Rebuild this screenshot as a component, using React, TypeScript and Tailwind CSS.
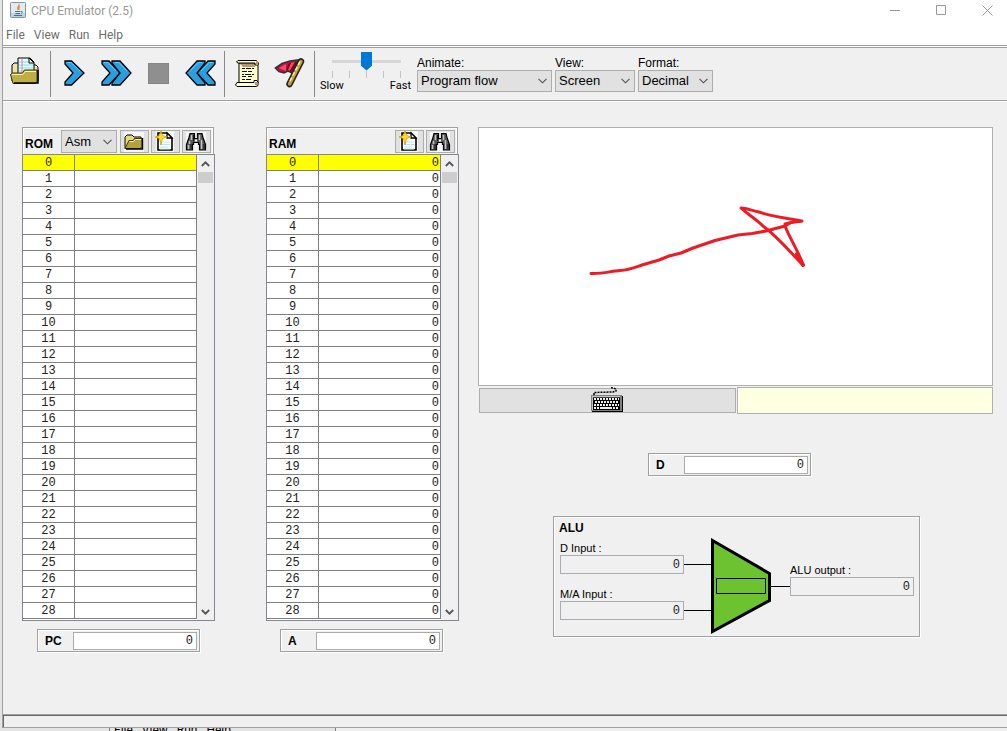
import React, { useState } from "react";

const menus = ["File", "View", "Run", "Help"];

const rows = Array.from({ length: 29 }, (_, i) => i);

const Chevron = ({ className = "" }: { className?: string }) => (
  <svg
    className={className}
    width="9"
    height="6"
    viewBox="0 0 9 6"
    fill="none"
    stroke="#505050"
    strokeWidth="1.1"
  >
    <path d="M.5.8l4 4 4-4" />
  </svg>
);

const JavaIcon = () => (
  <svg width="16" height="16" viewBox="0 0 16 16">
    <rect x=".5" y=".5" width="15" height="15" rx="1" fill="#e4ebf0" stroke="#7d95ab" />
    <path d="M1 11h14v4H1z" fill="#c3d0da" />
    <path d="M9 2c1 2-3 3-1 6M10 4.500c-2 1-1 2-1 3.500" stroke="#ec8a3c" strokeWidth="1.300" fill="none" />
    <path d="M5 9.500h5.500M5.500 11.500h4.500M4 13.500h8M11 9.500c2-.5 1.500 1.500 0 2" stroke="#46708f" fill="none" />
  </svg>
);

const OpenIcon = () => (
  <svg width="30" height="32" viewBox="0 0 30 32">
    <path d="M2 24V8l2-2h5l2 2h15l2 2v14z" fill="#efe2ac" stroke="#000" />
    <path d="M8 17V1h12l4 4v12z" fill="#e6fbfd" stroke="#000" />
    <path d="M9 5h13M9 8h14M9 11h14M9 14h14" stroke="#7fe0f0" />
    <path d="M12 2v14" stroke="#f08080" />
    <path d="M19 1l5 5h-5z" fill="#fff" stroke="#000" />
    <path d="M.5 17.500l2-1.500h10l2-3H27v12l-2 1.500H3z" fill="#bfae45" stroke="#3f390c" />
    <path d="M2 17.500h11l2-3h11" fill="none" stroke="#fff3a5" />
    <path d="M28 13v13H4" fill="none" stroke="#000" strokeWidth="1.500" />
  </svg>
);

const StepIcon = () => (
  <svg width="21" height="26" viewBox="0 0 21 26">
    <path d="M1 1h6.500L20 13 7.500 25H1v-3l8-9-8-9z" fill="#2a9fe0" stroke="#000" strokeWidth="1.300" />
    <path d="M3 2.500h4l9 8.500" fill="none" stroke="#6cc8f8" />
  </svg>
);

const FastIcon = ({ flip }: { flip?: boolean }) => (
  <svg className={flip ? "-scale-x-100" : ""} width="31" height="26" viewBox="0 0 31 26">
    <path d="M1 1h7l11 12L8 25H1v-3l8-9-8-9z" fill="#2a9fe0" stroke="#000" strokeWidth="1.300" />
    <path d="M11 1h8l11 12-11 12h-8v-2l8-10-8-10z" fill="#2a9fe0" stroke="#000" strokeWidth="1.300" />
    <path d="M3 2.500h4l8 8.500M14 2.500h4l8 8.500" fill="none" stroke="#6cc8f8" />
  </svg>
);

const ScriptIcon = () => (
  <svg width="24" height="27" viewBox="0 0 24 27">
    <path d="M4 3v20h19V3z" fill="#ffffc9" stroke="#000" />
    <path d="M5 4h15v3H8z" fill="#bd9275" />
    <path d="M3 .5h18l2 1.500v3h-3V3H3L1.500 2z" fill="#ffffd5" stroke="#000" />
    <path d="M21 1h2v4h-2z" fill="#bd9275" />
    <path d="M2 22.500h17v-2h3l1 2v3l-2 1H2l-1.500-1.500z" fill="#ffffd5" stroke="#000" />
    <path d="M20 22h2.500v3H20z" fill="#bd9275" />
    <path
      d="M7 8.500h3m1 0h5m1 0h2M7 11.500h5m1 0h4M7 14.500h2m1 0h6m1 0h2M7 16.500h4m2 0h4M7 19.500h3m1 0h5"
      stroke="#111"
    />
  </svg>
);

const FlagIcon = () => (
  <svg width="31" height="30" viewBox="0 0 31 30">
    <path d="M1.500 10L8 5.500l8-2.500 8-1-6 13-4-2-4 2-5-1.500z" fill="#c4123a" stroke="#333" strokeWidth="1.600" />
    <path d="M5 10l7-4v7zM17 5l4-1-4 9-3-1z" fill="#f04a6a" />
    <path d="M16 5l-3 7M22 4l-6 10" stroke="#79001c" strokeWidth="1.800" />
    <path d="M27 3.500L15.500 26" stroke="#222" strokeWidth="6.500" strokeLinecap="round" />
    <path d="M27 3.500L15.500 26" stroke="#c99b35" strokeWidth="3.500" strokeLinecap="round" />
    <path d="M26 3.500L15 25" stroke="#fff0ae" strokeWidth="1.500" strokeDasharray="4 2" />
  </svg>
);

const FolderIcon = () => (
  <svg width="22" height="20" viewBox="0 0 22 20">
    <path d="M1 0h20v20H1z" fill="#f6f6f6" />
    <path d="M2 16.500V5l2-2h5l2 2h7v11z" fill="#e8d77c" stroke="#000" />
    <path d="M2 16.500l4-8h4l1.500-2H19v8l-2 2z" fill="#b4a23c" stroke="#3f390c" />
    <path d="M6.500 9.500h4l2-2H18" fill="none" stroke="#fff2a0" />
    <path d="M19.500 6v11H3" fill="none" stroke="#000" strokeWidth="1.500" />
  </svg>
);

const NewIcon = () => (
  <svg width="20" height="21" viewBox="0 0 20 21">
    <path d="M1 0h18v21H1z" fill="#f6f6f6" />
    <path d="M3 2h9l5 5v12H3z" fill="#fff" stroke="#000" strokeWidth="1.600" />
    <path d="M5 11h10M5 13.500h10M5 16h8M5 18h10" stroke="#b5e8f5" />
    <path d="M12 2v5h5z" fill="#fff" stroke="#000" strokeWidth="1.300" />
    <path d="M6 0l1.500 4.500L12 6 7.500 7.500 6 14 4.500 7.500 0 6l4.500-1.500z" fill="#ffdf22" stroke="#d89a00" strokeWidth=".8" />
  </svg>
);

const FindIcon = () => (
  <svg width="22" height="20" viewBox="0 0 22 20">
    <path d="M1 0h20v20H1z" fill="#f6f6f6" />
    <path
      d="M5 1.500h4.500v5h3v-5H17l1 4 2.500 7v5.500h-6v-5.500h-1v-2h-5v2h-1V18h-6v-5.500l2.500-7z"
      fill="#5a5a5a"
      stroke="#000"
      strokeWidth="1.200"
    />
    <path d="M6.500 3v5M4.500 9v3M3.500 13v4M14.500 3v5M16.500 8v9" stroke="#c4c4c4" strokeWidth="1.400" />
    <path d="M8.500 3v6M12.500 4v3M6 12v5M19 12v5" stroke="#111" />
    <path d="M10 7.500h2v2h-2z" fill="#fff" />
  </svg>
);

const KeyboardIcon = () => (
  <svg width="32" height="25" viewBox="0 0 32 25">
    <path d="M3 8V5.500L22 5l3-1v-2l-5-1.500" fill="none" stroke="#000" strokeWidth="1.500" strokeDasharray="2 1" />
    <path d="M1 9h31v16H1z" fill="#000" />
    <path d="M0 8h31v16H0z" fill="#808080" />
    <path d="M1 9h28v1H2v13H1z" fill="#c4c4c4" />
    <path d="M2 10.500h27v12.500H2z" fill="#000" />
    <path d="M3 12h25M4 15h24M3 18h25" stroke="#eee" strokeWidth="1.800" strokeDasharray="2 1" />
    <path d="M3 21h2m1 0h2m1 0h12m1 0h2m1 0h2" stroke="#eee" strokeWidth="1.800" />
  </svg>
);

interface ToolButtonProps {
  label: string;
  children: React.ReactNode;
}

const ToolButton: React.FC<ToolButtonProps> = ({ label, children }) => (
  <button
    aria-label={label}
    className="flex h-[46px] w-[42px] shrink-0 items-center justify-center pr-0.5 pb-0.5"
  >
    {children}
  </button>
);

const SmallButton: React.FC<ToolButtonProps> = ({ label, children }) => (
  <button
    aria-label={label}
    className="flex h-[23px] w-[29px] items-center justify-center border border-[#adadad] bg-[#e1e1e1] pr-0.5"
  >
    {children}
  </button>
);

interface DropDownProps {
  id: string;
  label: string;
  options: string[];
  width: string;
}

const DropDown: React.FC<DropDownProps> = ({ id, label, options, width }) => (
  <div className={`shrink-0 ${width}`}>
    <label htmlFor={id} className="block text-xs leading-[14px]">
      {label}
    </label>
    <div className="relative">
      <select
        id={id}
        className="block h-[22px] w-full appearance-none border border-[#adadad] bg-[#e1e1e1] pl-[3px] text-[13px] leading-5"
      >
        {options.map((o) => (
          <option key={o}>{o}</option>
        ))}
      </select>
      <Chevron className="pointer-events-none absolute top-2 right-[5px]" />
    </div>
  </div>
);

const Separator = () => <div className="h-[46px] w-px shrink-0 bg-[#888888]" />;

interface RegisterProps {
  name: string;
  className?: string;
}

const Register: React.FC<RegisterProps> = ({ name, className }) => (
  <div className={`w-[163px] border border-[#a0a0a0] shadow-[1px_1px_0_#ffffff] ${className}`}>
    <div className="flex h-[21px] border-t border-l border-white pr-0.5">
      <label htmlFor={`reg-${name}`} className="w-[34px] pl-1.5 text-xs leading-[21px] font-bold">
        {name}
      </label>
      <input
        id={`reg-${name}`}
        defaultValue="0"
        className="mt-px h-[18px] w-0 flex-1 border border-[#ababab] bg-white pr-[3px] text-right font-['Liberation_Mono',monospace] text-xs text-[#222222]"
      />
    </div>
  </div>
);

interface MemoryProps {
  name: string;
  value: string;
  withAsm?: boolean;
}

const Memory: React.FC<MemoryProps> = ({ name, value, withAsm }) => {
  const [selected, setSelected] = useState(0);

  return (
    <div className="w-[193px]">
      <div className="mr-px border border-b-0 border-[#a0a0a0]">
        <div className="flex h-[26px] gap-0.5 border border-b-0 border-white pt-px pr-px">
          <h2 className="flex-1 pl-px text-xs leading-[28px] font-bold">{name}</h2>
          {withAsm && (
            <div className="relative mr-px w-14">
              <select
                aria-label="ROM format"
                className="block h-[23px] w-full appearance-none border border-[#adadad] bg-[#e1e1e1] pl-[3px] text-[13px]"
              >
                <option>Asm</option>
                <option>Dec</option>
                <option>Hex</option>
                <option>Bin</option>
              </select>
              <Chevron className="pointer-events-none absolute top-[9px] right-[5px]" />
            </div>
          )}
          {withAsm && (
            <SmallButton label="Load program">
              <FolderIcon />
            </SmallButton>
          )}
          <SmallButton label={`Clear ${name}`}>
            <NewIcon />
          </SmallButton>
          <SmallButton label={`Search ${name}`}>
            <FindIcon />
          </SmallButton>
        </div>
      </div>

      <div className="flex h-[467px] overflow-hidden border border-[#828790] bg-white">
        <table
          aria-label={name}
          className="h-max flex-1 table-fixed border-separate border-spacing-0 font-['Liberation_Mono',monospace] text-xs text-[#222222]"
        >
          <tbody>
            {rows.map((i) => (
              <tr
                key={i}
                onClick={() => setSelected(i)}
                className={i === selected ? "bg-[#ffff00]" : "bg-white"}
              >
                <th
                  scope="row"
                  className="h-4 w-[52px] border-r border-b border-[#808080] p-0 pt-0.5 text-center leading-[13px] font-normal"
                >
                  {i}
                </th>
                <td className="h-4 border-r border-b border-[#808080] p-0 pt-0.5 pr-px text-right leading-[13px]">
                  {value}
                </td>
              </tr>
            ))}
          </tbody>
        </table>
        {/* scrollbar */}
        <div className="flex w-[17px] flex-col items-center bg-[#f0f0f0]">
          <button aria-label="Scroll up" className="flex h-[17px] w-[15px] items-center justify-center">
            <svg width="9" height="6" viewBox="0 0 9 6" fill="none" stroke="#555" strokeWidth="1.800">
              <path d="M.8 5l3.700-3.700L8.200 5" />
            </svg>
          </button>
          <div className="h-[11px] w-[15px] bg-[#cdcdcd]" />
          <button aria-label="Scroll down" className="mt-auto flex h-[17px] w-[15px] items-center justify-center">
            <svg width="9" height="6" viewBox="0 0 9 6" fill="none" stroke="#555" strokeWidth="1.800">
              <path d="M.8 1l3.700 3.700L8.200 1" />
            </svg>
          </button>
        </div>
      </div>

      <Register name={withAsm ? "PC" : "A"} className={`mt-2 ${withAsm ? "ml-[15px]" : "ml-3.5"}`} />
    </div>
  );
};

interface AluFieldProps {
  id: string;
  label: string;
}

const AluField: React.FC<AluFieldProps> = ({ id, label }) => (
  <div>
    <label htmlFor={id} className="block text-[11px] leading-[14px]">
      {label}
    </label>
    <input
      id={id}
      readOnly
      value="0"
      className="block h-[19px] w-[124px] border border-[#ababb3] pr-[3px] text-right font-['Liberation_Mono',monospace] text-xs text-[#222222]"
    />
  </div>
);

const Alu = () => (
  <section className="ml-[75px] h-[121px] w-[367px] border border-[#a0a0a0] shadow-[1px_1px_0_#ffffff]">
    <div className="h-full border-t border-l border-white">
      <h2 className="h-5 pl-1 text-xs leading-5 font-bold">ALU</h2>
      <div className="flex pl-[5px]">
        <div className="flex flex-col gap-[13px] pt-[3px]">
          <AluField id="alu-d" label="D Input :" />
          <AluField id="alu-ma" label="M/A Input :" />
        </div>
        <svg width="106" height="97" viewBox="0 0 106 97" fill="none" stroke="#000">
          <path d="M0 26.500h28M0 72.500h28M86 48.500h20" />
          <path d="M28.500 2.500l57 33v27l-57 31z" fill="#6cc22f" strokeWidth="3" />
          <path d="M32.500 40.500h49v15h-49z" />
        </svg>
        <div className="pt-[25px]">
          <AluField id="alu-out" label="ALU output :" />
        </div>
      </div>
    </div>
  </section>
);

const App = () => {
  return (
    <div className="flex h-screen min-h-[731px] flex-col overflow-hidden bg-[#e4e4e4] font-['Liberation_Sans',Arial,sans-serif] text-black">
      <div className="ml-0.5 flex flex-1 flex-col border-l border-[#a0a0a0] bg-[#f0f0f0]">
        {/* Title bar */}
        <header className="-mr-[3px] flex h-[26px] items-start bg-white pl-[7px] font-[Roboto,sans-serif] text-[#999999]">
          <div className="flex gap-[5px] pt-0.5">
            <JavaIcon />
            <h1 className="text-xs leading-[18px]">CPU Emulator (2.5)</h1>
          </div>
          <div className="ml-auto flex">
            <button aria-label="Minimize" className="flex h-[21px] w-[46px] items-center justify-center">
              <svg width="11" height="11" viewBox="0 0 11 11" stroke="#999">
                <path d="M0 5.500h10" />
              </svg>
            </button>
            <button aria-label="Maximize" className="flex h-[21px] w-[46px] items-center justify-center">
              <svg width="11" height="11" viewBox="0 0 11 11" stroke="#999" fill="none">
                <path d="M.5.5h9v9h-9z" />
              </svg>
            </button>
            <button aria-label="Close" className="flex h-[21px] w-[46px] items-center justify-center">
              <svg width="11" height="11" viewBox="0 0 11 11" stroke="#999">
                <path d="M.5.5l10 10M10.500.5l-10 10" />
              </svg>
            </button>
          </div>
        </header>

        <nav className="flex h-[19px] gap-[9px] bg-white pl-[3px] font-[Roboto,sans-serif] text-xs leading-[19px] text-[#6d6d6d]">
          {menus.map((m) => (
            <button key={m}>{m}</button>
          ))}
        </nav>

        {/* Toolbar */}
        <div className="h-[3px] border-y border-[#a0a0a0] bg-white" />
        <div className="flex h-[53px] items-center border-b border-[#a0a0a0] shadow-[0_1px_0_#ffffff]">
          <div className="flex pr-[3px] pl-0.5">
            <ToolButton label="Load program">
              <OpenIcon />
            </ToolButton>
          </div>
          <Separator />
          <div className="flex pr-0.5 pl-[3px]">
            <ToolButton label="Single step">
              <StepIcon />
            </ToolButton>
            <ToolButton label="Run">
              <FastIcon />
            </ToolButton>
            <ToolButton label="Stop">
              <span className="block size-[21px] border border-[#858585] bg-[#8f8f8f]" />
            </ToolButton>
            <ToolButton label="Reset">
              <FastIcon flip />
            </ToolButton>
          </div>
          <Separator />
          <div className="flex pr-[3px] pl-0.5">
            <ToolButton label="Script">
              <ScriptIcon />
            </ToolButton>
            <ToolButton label="Breakpoints">
              <FlagIcon />
            </ToolButton>
          </div>
          <Separator />

          <div className="mb-1 ml-[5px] flex w-[91px] shrink-0 flex-col items-end">
            <div className="mr-2.5 flex h-[19px] w-[69px] items-center bg-[linear-gradient(#d6d6d6,#d6d6d6)] bg-[length:100%_3px] bg-center bg-no-repeat">
              <input
                type="range"
                aria-label="Speed"
                min={1}
                max={5}
                defaultValue={3}
                className="h-[19px] w-full appearance-none bg-transparent [&::-webkit-slider-thumb]:h-[19px] [&::-webkit-slider-thumb]:w-[11px] [&::-webkit-slider-thumb]:appearance-none [&::-webkit-slider-thumb]:bg-[#0078d7] [&::-webkit-slider-thumb]:[clip-path:polygon(0_0,100%_0,100%_75%,50%_100%,0_75%)]"
              />
            </div>
            <div className="mr-2.5 flex h-[7px] w-[69px] justify-between">
              {[1, 2, 3, 4, 5].map((t) => (
                <span key={t} className="w-px bg-[#c4c4c4]" />
              ))}
            </div>
            <div className="flex w-full justify-between font-[Roboto,sans-serif] text-[11px] leading-[15px]">
              <span>Slow</span>
              <span>Fast</span>
            </div>
          </div>

          <div className="ml-1.5 flex gap-[3px]">
            <DropDown
              id="animate"
              label="Animate:"
              width="w-[135px]"
              options={["Program flow", "Program & data flow", "No animation"]}
            />
            <DropDown id="view" label="View:" width="w-20" options={["Screen", "Script", "Output", "Compare"]} />
            <DropDown id="format" label="Format:" width="w-[75px]" options={["Decimal", "Hexa", "Binary"]} />
          </div>
        </div>

        <main className="flex flex-1 items-start pt-[26px] pr-3.5 pl-[19px]">
          <Memory name="ROM" value="" withAsm />
          <div className="ml-[51px]">
            <Memory name="RAM" value="0" />
          </div>

          <div className="ml-[19px] flex-1">
            <div className="h-[259px] border border-[#b0b0b0] bg-white">
              <svg
                className="mt-[72px] ml-[105px]"
                width="230"
                height="80"
                viewBox="584 200 230 80"
                fill="none"
                stroke="#ed1c24"
                strokeWidth="3"
                strokeLinecap="round"
                strokeLinejoin="round"
              >
                <path d="M591 273.500C603 274 611 271 620 270.500S636 267 642 265L659 260 669 256 681 253 693 248 715 240.500 738 235 752 233.500 766 231 785 226 790 223" />
                <path d="M785 224C792 222 797 222 802 221C790 219 770 216 759 212C750 210 746 208 741 208C746 213 756 219 763 226C778 237 790 252 803 265C799 252 789 237 785 226" />
                <path d="M797 254l6 11" strokeWidth="4" />
              </svg>
            </div>
            <div className="mt-px flex gap-px">
              <button
                aria-label="Keyboard"
                className="mt-px ml-px flex h-[25px] flex-1 items-center justify-center border border-[#adadad] bg-[#e1e1e1] pb-0.5"
              >
                <KeyboardIcon />
              </button>
              <input aria-label="Key pressed" readOnly className="h-[27px] w-0 flex-1 border border-[#b0b0b0] bg-[#ffffe1]" />
            </div>
            <Register name="D" className="mt-[39px] mb-10 ml-[170px]" />
            <Alu />
          </div>
        </main>
      </div>

      {/* Status bar */}
      <footer className="ml-0.5 h-3.5 border-t border-b border-l border-[#a0a0a0] bg-[#f0f0f0]">
        <div className="h-full border-t border-l border-[#696969]" />
      </footer>

      {/* Window behind */}
      <div className="flex h-[3px] overflow-hidden">
        <div className="ml-[109px] flex w-[227px] items-center gap-[9px] border-x border-[#808080] pl-1 font-[Roboto,sans-serif] text-xs">
          {menus.map((m) => (
            <span key={m}>{m}</span>
          ))}
        </div>
        <div className="flex-1 bg-[#efefef]" />
      </div>
    </div>
  );
};

export default App;
